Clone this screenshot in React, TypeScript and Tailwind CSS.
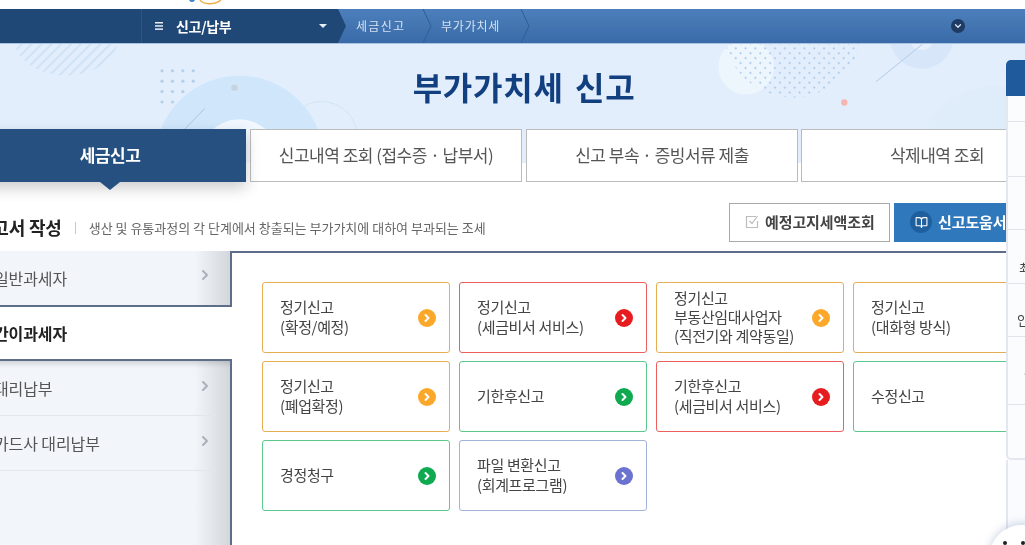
import React from 'react';
import { BookOpen, ChevronDown, ChevronRight } from 'lucide-react';

type Tone = 'orange' | 'red' | 'green' | 'purple';

const toneClasses: Record<Tone, { border: string; dot: string }> = {
  orange: { border: 'border-[#e5ae55]', dot: 'bg-[#fba82a]' },
  red: { border: 'border-[#ec5f5f]', dot: 'bg-[#e71c1f]' },
  green: { border: 'border-[#5ac98b]', dot: 'bg-[#0fa94f]' },
  purple: { border: 'border-[#a3b2d8]', dot: 'bg-[#6b72cf]' },
};

const cards: { lines: string[]; tone: Tone }[] = [
  { lines: ['정기신고', '(확정/예정)'], tone: 'orange' },
  { lines: ['정기신고', '(세금비서 서비스)'], tone: 'red' },
  { lines: ['정기신고', '부동산임대사업자', '(직전기와 계약동일)'], tone: 'orange' },
  { lines: ['정기신고', '(대화형 방식)'], tone: 'orange' },
  { lines: ['정기신고', '(폐업확정)'], tone: 'orange' },
  { lines: ['기한후신고'], tone: 'green' },
  { lines: ['기한후신고', '(세금비서 서비스)'], tone: 'red' },
  { lines: ['수정신고'], tone: 'green' },
  { lines: ['경정청구'], tone: 'green' },
  { lines: ['파일 변환신고', '(회계프로그램)'], tone: 'purple' },
];

const tabs = ['신고내역 조회 (접수증 · 납부서)', '신고 부속 · 증빙서류 제출', '삭제내역 조회'];

const Crumb = () => (
  <svg width="10" height="34" viewBox="0 0 10 34" className="shrink-0" fill="none">
    <path d="M1 0L9 17L1 34" stroke="#2f5d97" strokeWidth="1" />
  </svg>
);

const HeroArt = () => (
  <svg className="absolute inset-0 h-full w-full" viewBox="-26 43 1100 120" fill="none">
    <defs>
      <pattern id="hatch" width="7" height="7" patternUnits="userSpaceOnUse" patternTransform="rotate(45)">
        <rect width="2" height="7" fill="#cfe2f6" />
      </pattern>
      <pattern id="dots" width="7" height="7" patternUnits="userSpaceOnUse" patternTransform="rotate(45)">
        <circle cx="2" cy="2" r="1.1" fill="#a9c8ea" />
      </pattern>
    </defs>
    <ellipse cx="62" cy="33" rx="54" ry="42" fill="url(#hatch)" />
    {[0, 1, 2, 3].map((r) =>
      [0, 1, 2, 3].map((c) => (
        <circle key={`${r}-${c}`} cx={159 + c * 10.5} cy={70 + r * 10.5} r="1.6" fill="#b4cfe9" />
      )),
    )}
    <circle cx="237" cy="160" r="85" fill="#cfe6fb" />
    <circle cx="237" cy="160" r="41" fill="#f1f7fe" />
    <circle cx="320" cy="137" r="36" stroke="#d2e4f6" strokeWidth="1" />
    <path d="M178 133L202 108" stroke="#a8c6e4" strokeWidth="1" />
    <circle cx="232" cy="87" r="3.2" fill="#c9d3dd" />
    <circle cx="748" cy="66" r="28" fill="#edf5fd" />
    <circle cx="795" cy="27" r="70" fill="url(#dots)" />
    <circle cx="925" cy="36" r="32" fill="#d8e6f9" />
    <circle cx="925" cy="36" r="13" fill="#e6effb" />
    <path d="M879 81L926 43" stroke="#afcbe7" strokeWidth="1" />
    <circle cx="847" cy="102" r="3.2" fill="#f6b6b0" />
    <ellipse cx="1000" cy="150" rx="75" ry="65" fill="#dfedfb" />
  </svg>
);

const App: React.FC = () => {
  return (
    <div className="relative h-[545px] w-[1025px] overflow-hidden bg-white font-['Noto_Sans_CJK_KR','Noto_Sans',sans-serif] text-[#444] blur-[0.4px]">
      {/* logo scrap at the top edge */}
      <div className="flex h-[9px] pl-[188px]">
        <svg width="40" height="9" viewBox="0 0 40 9" fill="none">
          <circle cx="4" cy="-1" r="3" fill="#3f7fc9" />
          <path d="M12 0C15 5 27 5 33 0" stroke="#f0ac48" strokeWidth="1.4" />
        </svg>
      </div>

      {/* nav bar */}
      <div className="flex h-[34px] bg-[linear-gradient(to_bottom,#4c7fbb,#3a6ba8)]">
        <div className="flex w-[338px] bg-[#1f4877]">
          <div className="w-[142px] border-r border-[#2a5688]" />
          <div className="flex flex-1 items-center pl-[13px] pr-[11px] text-white">
            <svg width="8" height="8" viewBox="0 0 8 8" fill="#e8eef6">
              <rect width="8" height="1.5" />
              <rect y="3.2" width="8" height="1.5" />
              <rect y="6.4" width="8" height="1.5" />
            </svg>
            <span className="ml-[13px] text-[14px] font-bold tracking-[-0.3px]">신고/납부</span>
            <span className="ml-auto h-0 w-0 border-x-[4px] border-t-[4px] border-x-transparent border-t-[#e8eef6]" />
          </div>
        </div>
        <svg width="8" height="34" viewBox="0 0 8 34" className="shrink-0">
          <path d="M0 0L8 17L0 34Z" fill="#1f4877" />
        </svg>
        <span className="ml-[10px] w-[66px] self-center text-[12px] tracking-[1.3px] text-[#d5e2f1]">세금신고</span>
        <Crumb />
        <span className="ml-[9px] w-[79px] self-center text-[12px] tracking-[0.8px] text-[#d5e2f1]">부가가치세</span>
        <Crumb />
        <span className="ml-[421px] flex h-[14px] w-[14px] items-center justify-center self-center rounded-full bg-[#1f3a63]">
          <ChevronDown size={10} strokeWidth={3} className="text-[#dfe7f1]" />
        </span>
      </div>

      <div className="ml-[-26px] w-[1100px]">
        {/* hero */}
        <div className="relative h-[120px] border-t border-[#a9c4e2] bg-[#e2eefb]">
          <HeroArt />
          <h1 className="relative pt-[21px] text-center text-[32px] font-bold leading-[42px] tracking-[0.8px] text-[#123f80] [word-spacing:3px]">
            부가가치세 신고
          </h1>
        </div>

        {/* tabs */}
        <div className="relative z-10 mt-[-34px] flex gap-[4px]">
          <div className="relative flex h-[53px] w-[272px] items-center justify-center bg-[#26507f] pb-[2px] text-[17px] font-bold tracking-[-0.5px] text-white shadow-[0_6px_14px_rgba(0,0,0,0.2)]">
            세금신고
            <span className="absolute left-[126px] top-full h-0 w-0 border-x-[10px] border-t-[8px] border-x-transparent border-t-[#26507f]" />
          </div>
          {tabs.map((tab, i) => (
            <div
              key={tab}
              className={`flex h-[53px] w-[272px] items-center justify-center border border-[#bbbbbb] bg-white pb-[2px] text-[17px] tracking-[-0.5px] text-[#555] ${i === 2 ? 'ml-[-1px]' : ''}`}
            >
              {tab}
            </div>
          ))}
        </div>

        {/* section title row */}
        <div className="flex h-[69px] items-center pr-[34px]">
          <div className="mt-[22px] flex items-center">
            <span className="ml-[2px] text-[18px] font-bold tracking-[-0.2px] text-[#222]">신고서 작성</span>
            <span className="ml-[13px] h-[12px] w-px bg-[#c8c8c8]" />
            <span className="ml-[13px] text-[13px] tracking-[0px] text-[#666]">
              생산 및 유통과정의 각 단계에서 창출되는 부가가치에 대하여 부과되는 조세
            </span>
          </div>
          <div className="ml-auto mt-[11px] flex gap-[4px]">
            <button className="flex h-[39px] w-[161px] items-center gap-[6px] border border-[#a9a9a9] bg-white pl-[15px] text-[15px] font-bold tracking-[-0.1px] text-[#444]">
              <svg width="14" height="14" viewBox="0 0 14 14" fill="none" stroke="#bdbdbd" strokeWidth="1.2">
                <path d="M11 1.5H1.5V12.5H12.5V6" />
                <path d="M4.5 6L7 8.5L12.5 1" />
              </svg>
              예정고지세액조회
            </button>
            <button className="flex h-[39px] w-[146px] items-center gap-[6px] bg-[#2f78bc] pl-[16px] text-[15px] font-bold tracking-[-0.1px] text-white">
              <span className="flex h-[22px] w-[22px] items-center justify-center rounded-full bg-[#1f5f9e]">
                <BookOpen size={13} />
              </span>
              신고도움서비스
            </button>
          </div>
        </div>

        {/* body */}
        <div className="flex h-[294px]">
          <aside className="flex w-[258px] shrink-0 flex-col text-[16px] tracking-[-0.1px]">
            <div className="flex h-[56px] items-center justify-between border-b-2 border-r-2 border-[#5d6d8a] bg-[linear-gradient(to_right,#f2f5fa_86%,#d3d6db)] pl-[20px] pr-[17px] text-[#555]">
              일반과세자
              <ChevronRight size={16} strokeWidth={3} className="mt-[-6px] text-[#abb1bb]" />
            </div>
            <div className="flex h-[52px] items-center pl-[20px] font-bold text-[#222]">간이과세자</div>
            <div className="flex-1 border-r-2 border-t-2 border-[#5d6d8a] bg-[linear-gradient(to_right,#f2f5fa_86%,#d3d6db)] text-[#555] shadow-[inset_0_7px_6px_-5px_rgba(0,0,0,0.18)]">
              <div className="mr-[14px] flex h-[55px] items-center justify-between border-b border-[#e3e6ec] pl-[20px] pr-[3px]">
                대리납부
                <ChevronRight size={16} strokeWidth={3} className="mt-[-4px] text-[#abb1bb]" />
              </div>
              <div className="mr-[14px] flex h-[55px] items-center justify-between border-b border-[#e3e6ec] pl-[20px] pr-[3px]">
                카드사 대리납부
                <ChevronRight size={16} strokeWidth={3} className="mt-[-4px] text-[#abb1bb]" />
              </div>
            </div>
          </aside>

          <main className="ml-[-1px] flex-1 border-t-2 border-[#5d6d8a] pl-[31px] pt-[29px]">
            <div className="grid auto-rows-[71px] grid-cols-[repeat(4,188px)] gap-x-[9px] gap-y-[8px]">
              {cards.map((card, i) => (
                <div
                  key={i}
                  className={`flex items-center justify-between rounded-[3px] border pl-[17px] pr-[13px] ${toneClasses[card.tone].border}`}
                >
                  <div className={`mt-[-2px] text-[15px] tracking-[-0.35px] text-[#444] ${card.lines.length > 2 ? 'leading-[19px]' : 'leading-[20px]'}`}>
                    {card.lines.map((line) => (
                      <div key={line}>{line}</div>
                    ))}
                  </div>
                  <span className={`flex h-[18px] w-[18px] shrink-0 items-center justify-center rounded-full ${toneClasses[card.tone].dot}`}>
                    <ChevronRight size={12} strokeWidth={4} className="text-white" />
                  </span>
                </div>
              ))}
            </div>
          </main>
        </div>
      </div>

      {/* floating side panel */}
      <div className="absolute left-[1006px] top-[60px] z-20 w-[60px] text-[13px] text-[#444]">
        <div className="rounded-t-[5px] bg-[#1f5a9c]">
          <div className="h-[36px]" />
        </div>
        <div className="rounded-bl-[5px] border-b-2 border-l-2 border-[#e3e7ef] bg-[#fbfcfe]">
          <div className="h-[26px] border-b border-[#e1e4ea]" />
          <div className="h-[55px] border-b border-[#e1e4ea]" />
          <div className="h-[53px] border-b border-[#e1e4ea]" />
          <div className="flex h-[54px] items-end border-b border-[#e1e4ea] pb-[6px] pl-[11px]">최</div>
          <div className="flex h-[53px] items-end border-b border-[#e1e4ea] pb-[7px] pl-[9px]">인</div>
          <div className="flex h-[68px] items-center border-b border-[#e1e4ea] pl-[16px]">사</div>
          <div className="h-[53px]" />
        </div>
        <div className="h-[85px] border-l-2 border-[#e3e7ef] bg-[#f9fbff]" />
      </div>

      {/* round floating button */}
      <div className="absolute left-[989px] top-[525px] z-30 flex h-[66px] w-[66px] justify-center gap-[14px] rounded-full bg-white pr-[16px] pt-[16px] shadow-[0_-2px_8px_rgba(120,140,180,0.35)]">
        <span className="h-[4px] w-[4px] rounded-full bg-[#222]" />
        <span className="h-[4px] w-[4px] rounded-full bg-[#222]" />
      </div>
    </div>
  );
};

export default App;
